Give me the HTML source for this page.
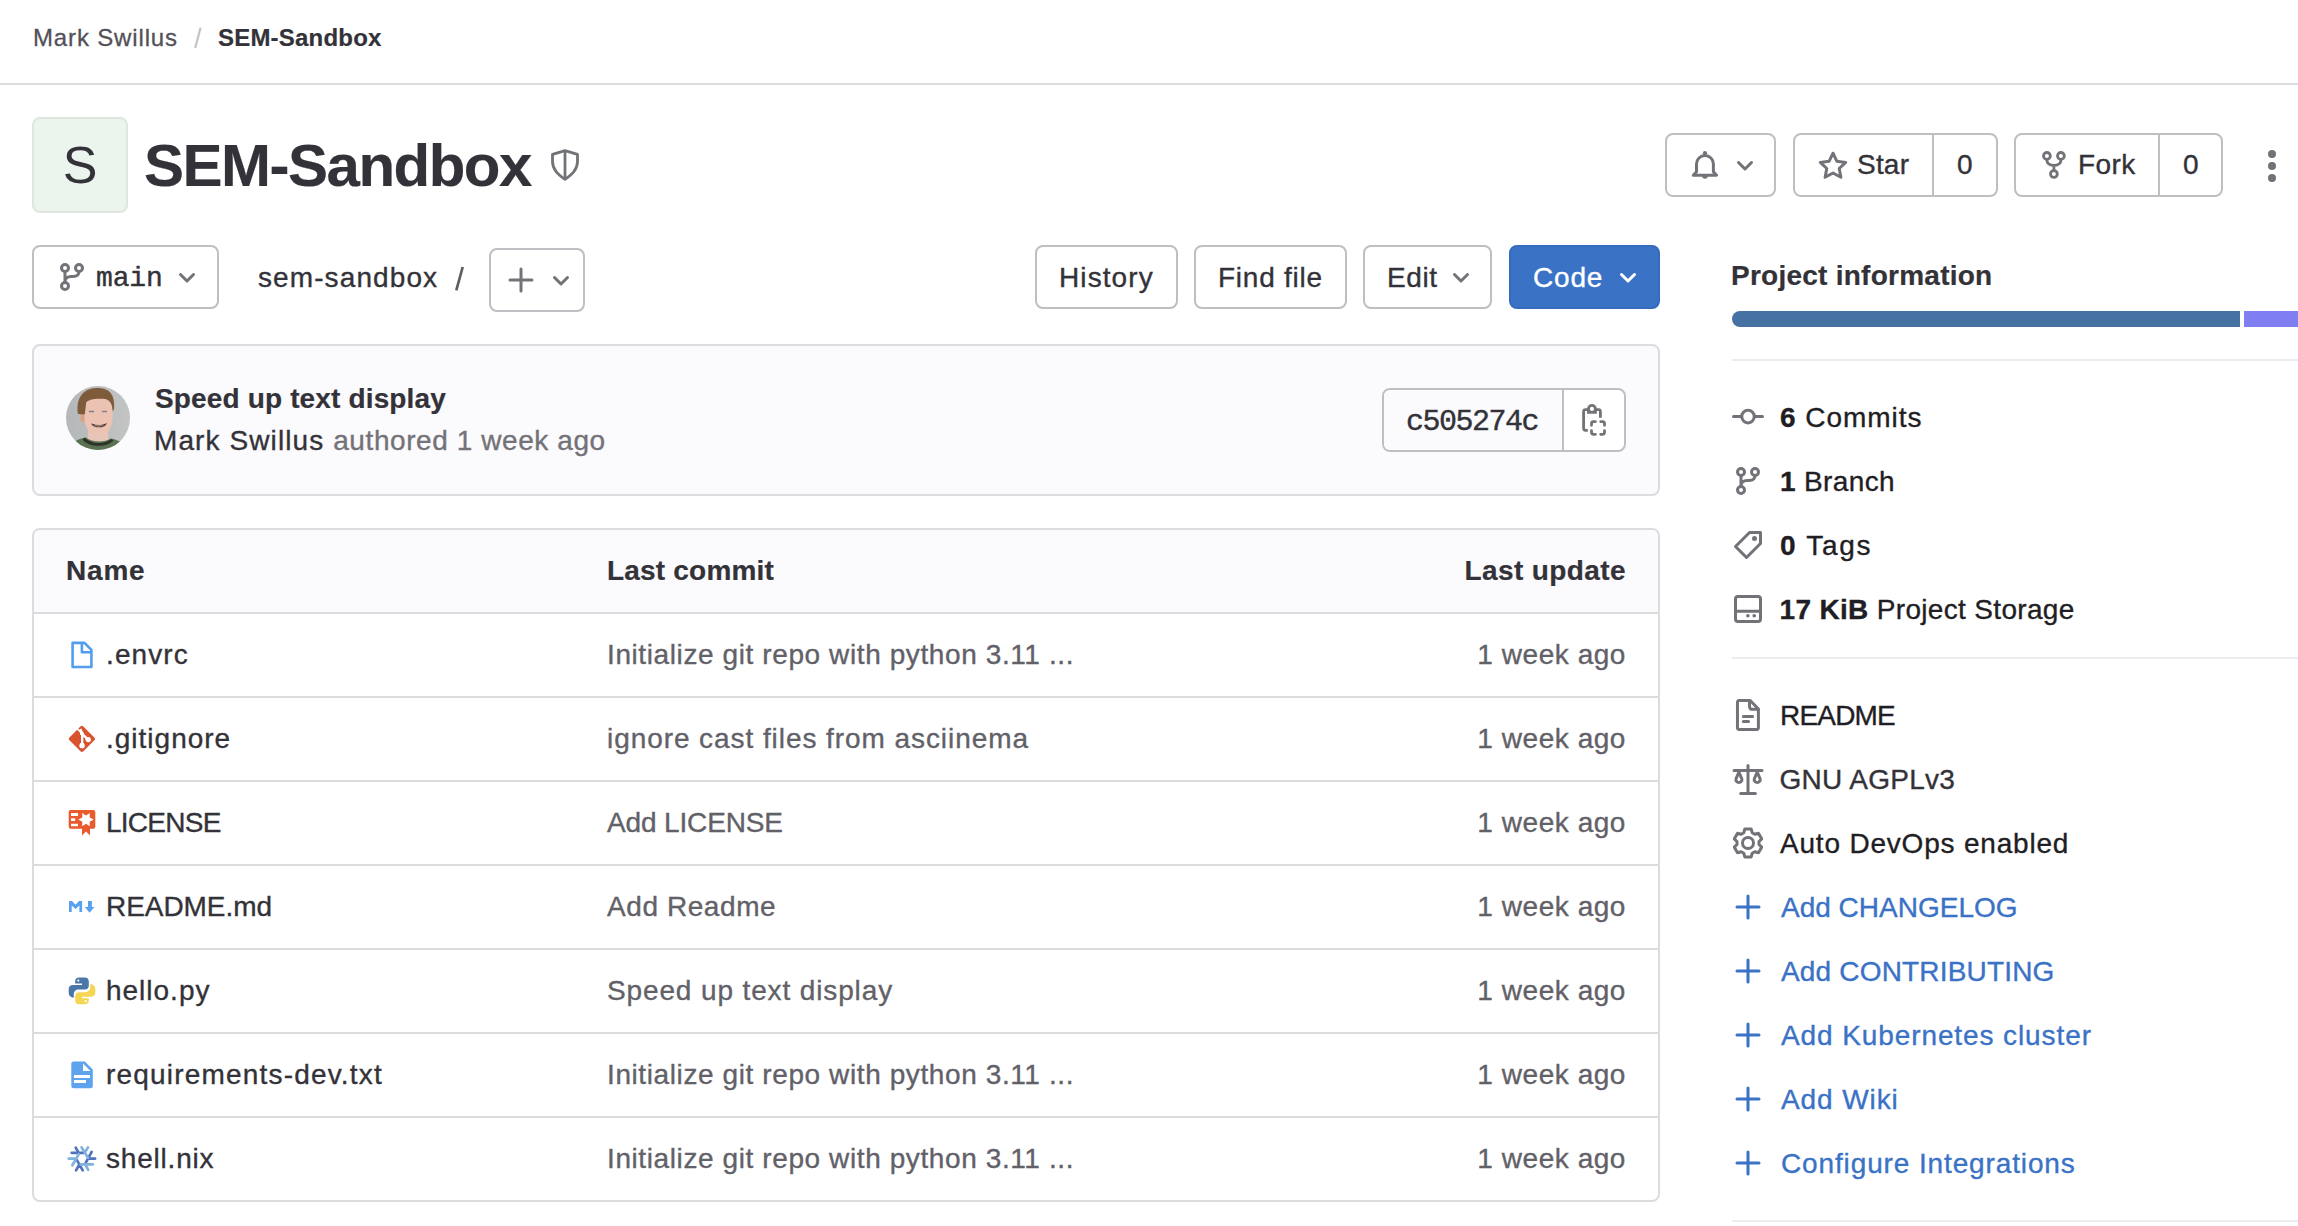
<!DOCTYPE html>
<html><head><meta charset="utf-8">
<style>
*{box-sizing:border-box;margin:0;padding:0}
html,body{width:2298px;height:1226px;overflow:hidden;background:#fff}
body{font-family:"Liberation Sans",sans-serif;color:#333238;position:relative}
.a{position:absolute;white-space:nowrap}
.t28{font-size:28px;line-height:40px;height:40px;-webkit-text-stroke:0.35px currentColor}
.b{-webkit-text-stroke:0.2px currentColor}
.b{font-weight:bold}
.btn{position:absolute;border:2px solid #bfbfc3;border-radius:8px;background:#fff}
svg{position:absolute;overflow:visible}
.ic{fill:none;stroke:#737278;stroke-width:1.5;stroke-linecap:round;stroke-linejoin:round}
.hl{position:absolute;height:2px;background:#dcdcde}
.mono{font-family:"Liberation Mono",monospace;-webkit-text-stroke:0.4px currentColor}
</style></head><body>

<!-- breadcrumb -->
<div class="a" style="left:33px;top:21.5px;font-size:24px;line-height:32px;color:#535158;letter-spacing:0.85px;-webkit-text-stroke:0.3px currentColor">Mark Swillus</div>
<svg style="left:190px;top:22px" width="16" height="32" viewBox="0 0 16 32"><path d="M5.2 26 10.6 5.6" stroke="#c4c3c9" stroke-width="2.2"/></svg>
<div class="a b" style="left:218px;top:21.5px;font-size:24px;line-height:32px;color:#333238;letter-spacing:0.2px">SEM-Sandbox</div>
<div class="hl" style="left:0;top:83px;width:2298px;background:#dcdcde"></div>

<!-- project avatar + title -->
<div class="a" style="left:32px;top:117px;width:96px;height:96px;border:2px solid #dfe6e0;border-radius:8px;background:#ecf4ee;text-align:center;font-size:52px;line-height:92px;color:#333238">S</div>
<div class="a b" style="left:144px;top:129.5px;font-size:60px;line-height:72px;letter-spacing:-1.5px;color:#333238">SEM-Sandbox</div>



<!-- shield -->
<svg style="left:540px;top:140px" width="50" height="50" viewBox="0 0 50 50"><g fill="none" stroke="#737278" stroke-width="2.8" stroke-linejoin="round"><path d="M25 10.6 12.5 14.4V21.5c0 8 5.5 12.8 12.5 17.8 7-5 12.5-9.8 12.5-17.8V14.4z"/><path d="M25 11v27"/></g></svg>

<!-- top right buttons -->
<div class="btn" style="left:1665px;top:133px;width:111px;height:64px"></div>
<svg style="left:1688px;top:148px" width="32" height="32" viewBox="0 0 16 16"><g fill="none" stroke="#737278" stroke-width="1.5" stroke-linejoin="round" stroke-linecap="round"><path d="M4.25 11.9V8a4.225 4.225 0 0 1 8.45 0v3.9l1.6 1.7H2.65z"/></g><circle cx="8.475" cy="2.6" r="1.05" fill="#737278"/><path d="M7.1 14h2.75a1.375 1.375 0 0 1-2.75 0z" fill="#737278"/></svg>
<svg style="left:1729px;top:149px" width="32" height="32" viewBox="0 0 16 16"><path class="ic" style="stroke:#737278" d="M4.75 6.75 8 10l3.25-3.25"/></svg>
<div class="btn" style="left:1793px;top:133px;width:205px;height:64px"></div>
<div class="a" style="left:1932px;top:135px;width:2px;height:60px;background:#bfbfc3"></div>
<svg style="left:1817px;top:150px" width="32" height="32" viewBox="0 0 16 16"><path class="ic" d="M8 1.6l1.95 4.05 4.4.55-3.25 3.05.85 4.4L8 11.5l-3.95 2.15.85-4.4L1.65 6.2l4.4-.55z"/></svg>
<div class="a t28" style="left:1857px;top:145px;letter-spacing:0.2px">Star</div>
<div class="a t28" style="left:1957px;top:145px">0</div>
<div class="btn" style="left:2014px;top:133px;width:209px;height:64px"></div>
<div class="a" style="left:2158px;top:135px;width:2px;height:60px;background:#bfbfc3"></div>
<svg style="left:2034px;top:145px" width="40" height="40" viewBox="0 0 40 40"><g fill="none" stroke="#737278" stroke-width="2.8" stroke-linecap="round"><circle cx="12.9" cy="10.9" r="3.4"/><circle cx="26.9" cy="10.9" r="3.4"/><circle cx="19.9" cy="29" r="3.4"/><path d="M12.9 14.3v1.2c0 3 2.6 4.5 7 5 4.4-.5 7-2 7-5v-1.2M19.9 20.5v5.1"/></g></svg>
<div class="a t28" style="left:2078px;top:145px;letter-spacing:0.4px">Fork</div>
<div class="a t28" style="left:2183px;top:145px">0</div>
<div class="a" style="left:2268px;top:149.5px;width:8.2px;height:8.2px;border-radius:50%;background:#737278"></div>
<div class="a" style="left:2268px;top:161.5px;width:8.2px;height:8.2px;border-radius:50%;background:#737278"></div>
<div class="a" style="left:2268px;top:173.5px;width:8.2px;height:8.2px;border-radius:50%;background:#737278"></div>

<!-- branch row -->
<div class="btn" style="left:32px;top:245px;width:187px;height:64px"></div>
<svg style="left:56px;top:261px" width="32" height="32" viewBox="0 0 16 16"><g class="ic"><circle cx="4.5" cy="3.5" r="1.75"/><circle cx="11.5" cy="3.5" r="1.75"/><circle cx="4.5" cy="12.5" r="1.75"/><path d="M4.5 5.25v5.5M11.5 5.25c0 1.6-1.2 2.5-3 2.5h-1c-1.8 0-3 1-3 2.5"/></g></svg>
<div class="a mono" style="left:96px;top:259px;font-size:28px;line-height:40px;color:#333238;letter-spacing:-0.15px">main</div>
<svg style="left:171px;top:261px" width="32" height="32" viewBox="0 0 16 16"><path class="ic" style="stroke:#737278" d="M4.75 6.75 8 10l3.25-3.25"/></svg>
<div class="a t28" style="left:258px;top:258px;letter-spacing:1.1px">sem-sandbox</div>
<svg style="left:450px;top:262px" width="20" height="34" viewBox="0 0 20 34"><path d="M6.3 28.3 12.7 5" stroke="#5f5e64" stroke-width="2.7" stroke-linecap="butt"/></svg>
<div class="btn" style="left:489px;top:248px;width:96px;height:64px"></div>
<svg style="left:505px;top:264px" width="32" height="32" viewBox="0 0 16 16"><path class="ic" style="stroke:#737278" d="M8 2.5v11M2.5 8h11"/></svg>
<svg style="left:545px;top:264px" width="32" height="32" viewBox="0 0 16 16"><path class="ic" style="stroke:#737278" d="M4.75 6.75 8 10l3.25-3.25"/></svg>

<div class="btn" style="left:1035px;top:245px;width:143px;height:64px"></div>
<div class="a t28" style="left:1059px;top:258px;letter-spacing:1.1px">History</div>
<div class="btn" style="left:1194px;top:245px;width:153px;height:64px"></div>
<div class="a t28" style="left:1218px;top:258px;letter-spacing:0.75px">Find file</div>
<div class="btn" style="left:1363px;top:245px;width:129px;height:64px"></div>
<div class="a t28" style="left:1387px;top:258px;letter-spacing:0.6px">Edit</div>
<svg style="left:1445px;top:261px" width="32" height="32" viewBox="0 0 16 16"><path class="ic" style="stroke:#737278" d="M4.75 6.75 8 10l3.25-3.25"/></svg>
<div class="btn" style="left:1509px;top:245px;width:151px;height:64px;background:#3a72c6;border-color:#346bbb"></div>
<div class="a t28" style="left:1533px;top:258px;color:#fff;letter-spacing:0.8px">Code</div>
<svg style="left:1612px;top:261px" width="32" height="32" viewBox="0 0 16 16"><path class="ic" style="stroke:#fff" d="M4.75 6.75 8 10l3.25-3.25"/></svg>

<!-- sidebar header -->
<div class="a t28 b" style="left:1731px;top:255.5px;letter-spacing:0.25px">Project information</div>
<div class="a" style="left:1732px;top:311px;width:508px;height:16px;background:#4672a3;border-radius:8px 0 0 8px"></div>
<div class="a" style="left:2244px;top:311px;width:54px;height:16px;background:#7f7ff2"></div>
<div class="hl" style="left:1732px;top:359px;width:566px;background:#ececef"></div>

<!-- commit box -->
<div class="a" style="left:32px;top:344px;width:1628px;height:152px;border:2px solid #dcdcde;border-radius:8px;background:#fbfafd"></div>
<svg style="left:66px;top:386px" width="64" height="64" viewBox="0 0 64 64">
<defs><clipPath id="cc"><circle cx="32" cy="32" r="32"/></clipPath><linearGradient id="bgg" x1="0" x2="1" y1="0" y2="0"><stop offset="0" stop-color="#b5b8ba"/><stop offset="1" stop-color="#c2c3c3"/></linearGradient></defs>
<g clip-path="url(#cc)">
<rect width="64" height="64" fill="url(#bgg)"/>
<path d="M22 42H42V57H22z" fill="#e6c6b8"/>
<path d="M2 66C4 57 12 52.5 20 51.5 25 56 38 57 45 52.5 53 54 60 58 62 66z" fill="#5a7253"/>
<path d="M19 51.5C23 58 39 59 45 53L47.5 54.5C41 62 22 61.5 16.5 53.5z" fill="#2c3226"/>
<ellipse cx="17" cy="31.5" rx="2.8" ry="5" fill="#d6a28c"/>
<path d="M18.5 22C18.5 14 24 11.5 32.5 11.5 41 11.5 46.5 14 46.5 22V32C46.5 43 40 49.5 32.5 49.5 25 49.5 18.5 43 18.5 32z" fill="#ecc3b3"/>
<path d="M12 28C9.5 14 16 2.5 30 2 43 1.5 49.5 8 48 23L46.6 25.5C46.5 17.5 43.5 13 37 12.8 30 12.3 23 13 20.2 16.5L18.8 28.5z" fill="#7d5b3b"/>
<path d="M23.5 25.5h4M36.5 25.5h4" stroke="#7d7f8c" stroke-width="1.4" stroke-linecap="round"/>
<path d="M26.5 38.5C29 41.5 37 41.5 39.5 38.3 36 39.6 30 39.6 26.5 38.5z" fill="#5a3e38" stroke="#5a3e38" stroke-width="1.2"/>
<path d="M27.5 38.9C30 39.9 36 39.9 38.5 38.8 36 40.6 30 40.6 27.5 38.9z" fill="#eadfc8"/>
</g></svg>
<div class="a t28 b" style="left:155px;top:379px;letter-spacing:0.15px">Speed up text display</div>
<div class="a t28" style="left:154px;top:421px;letter-spacing:1.1px">Mark Swillus <span style="color:#737278;letter-spacing:0.58px">authored 1 week ago</span></div>
<div class="a" style="left:1382px;top:388px;width:244px;height:64px;border:2px solid #bfbfc3;border-radius:8px;background:#fff;overflow:hidden"><div style="position:absolute;left:0;top:0;width:180px;height:60px;background:#fbfafd;border-right:2px solid #bfbfc3"></div></div>
<div class="a mono" style="left:1406px;top:401.5px;font-size:30px;line-height:40px;letter-spacing:-1.5px">c505274c</div>
<svg style="left:1574px;top:398px" width="40" height="44" viewBox="0 0 40 44"><g fill="none" stroke="#737278" stroke-width="2.8"><path d="M13.8 32.3h-2.2a2 2 0 0 1-2-2V13.6a2 2 0 0 1 2-2H14M22 11.6h2.4a2 2 0 0 1 2 2v6.1"/><path stroke-linecap="round" stroke-linejoin="round" d="M17.5 27.3v-1.7a2 2 0 0 1 2-2h1.9M26.7 23.6h1.8a2 2 0 0 1 2 2v1.7M30.5 32.6v1.7a2 2 0 0 1-2 2h-1.8M21.4 36.3h-1.9a2 2 0 0 1-2-2v-1.7"/></g><path fill="#737278" d="M13.05 10.9a4.9 4.9 0 0 1 9.8 0V15.8H13.05z"/><circle cx="17.95" cy="10.9" r="2.05" fill="#fff"/></svg>

<!-- table -->
<div class="a" style="left:32px;top:528px;width:1628px;height:674px;border:2px solid #dcdcde;border-radius:8px;background:#fff;overflow:hidden"><div style="position:absolute;left:0;top:0;width:100%;height:83px;background:#fbfafd"></div></div>
<div class="a t28 b" style="left:66px;top:551.3px;letter-spacing:0.8px">Name</div>
<div class="a t28 b" style="left:607px;top:551.3px;letter-spacing:0.2px">Last commit</div>
<div class="a t28 b" style="right:672px;top:551.3px;letter-spacing:0.4px">Last update</div>
<div class="hl" style="left:34px;top:612px;width:1624px"></div>
<div class="a t28" style="left:106px;top:635.3px;letter-spacing:1.10px">.envrc</div>
<div class="a t28" style="left:607px;top:635.3px;color:#626168;letter-spacing:0.6px">Initialize git repo with python 3.11 ...</div>
<div class="a t28" style="right:672px;top:635.3px;color:#626168;letter-spacing:0.55px">1 week ago</div>
<div class="hl" style="left:34px;top:696px;width:1624px"></div>
<div class="a t28" style="left:106px;top:719.3px;letter-spacing:1.00px">.gitignore</div>
<div class="a t28" style="left:607px;top:719.3px;color:#626168;letter-spacing:0.93px">ignore cast files from asciinema</div>
<div class="a t28" style="right:672px;top:719.3px;color:#626168;letter-spacing:0.55px">1 week ago</div>
<div class="hl" style="left:34px;top:780px;width:1624px"></div>
<div class="a t28" style="left:106px;top:803.3px;letter-spacing:-0.75px">LICENSE</div>
<div class="a t28" style="left:607px;top:803.3px;color:#626168;letter-spacing:-0.14px">Add LICENSE</div>
<div class="a t28" style="right:672px;top:803.3px;color:#626168;letter-spacing:0.55px">1 week ago</div>
<div class="hl" style="left:34px;top:864px;width:1624px"></div>
<div class="a t28" style="left:106px;top:887.3px;letter-spacing:-0.05px">README.md</div>
<div class="a t28" style="left:607px;top:887.3px;color:#626168;letter-spacing:0.58px">Add Readme</div>
<div class="a t28" style="right:672px;top:887.3px;color:#626168;letter-spacing:0.55px">1 week ago</div>
<div class="hl" style="left:34px;top:948px;width:1624px"></div>
<div class="a t28" style="left:106px;top:971.3px;letter-spacing:0.99px">hello.py</div>
<div class="a t28" style="left:607px;top:971.3px;color:#626168;letter-spacing:0.87px">Speed up text display</div>
<div class="a t28" style="right:672px;top:971.3px;color:#626168;letter-spacing:0.55px">1 week ago</div>
<div class="hl" style="left:34px;top:1032px;width:1624px"></div>
<div class="a t28" style="left:106px;top:1055.3px;letter-spacing:1.19px">requirements-dev.txt</div>
<div class="a t28" style="left:607px;top:1055.3px;color:#626168;letter-spacing:0.6px">Initialize git repo with python 3.11 ...</div>
<div class="a t28" style="right:672px;top:1055.3px;color:#626168;letter-spacing:0.55px">1 week ago</div>
<div class="hl" style="left:34px;top:1116px;width:1624px"></div>
<div class="a t28" style="left:106px;top:1139.3px;letter-spacing:0.80px">shell.nix</div>
<div class="a t28" style="left:607px;top:1139.3px;color:#626168;letter-spacing:0.6px">Initialize git repo with python 3.11 ...</div>
<div class="a t28" style="right:672px;top:1139.3px;color:#626168;letter-spacing:0.55px">1 week ago</div>

<!-- sidebar -->
<svg style="left:1732px;top:400px" width="32" height="32" viewBox="0 0 16 16"><g class="ic"><circle cx="8" cy="8.3" r="3.15"/><path d="M.75 8.3h4.1M11.15 8.3h4.1"/></g></svg>
<div class="a t28" style="left:1780px;top:398px;color:#1f1e24;letter-spacing:0.95px"><b>6</b> Commits</div>
<svg style="left:1732px;top:465px" width="32" height="32" viewBox="0 0 16 16"><g class="ic"><circle cx="4.5" cy="3.5" r="1.75"/><circle cx="11.5" cy="3.5" r="1.75"/><circle cx="4.5" cy="12.5" r="1.75"/><path d="M4.5 5.25v5.5M11.5 5.25c0 1.6-1.2 2.5-3 2.5h-1c-1.8 0-3 1-3 2.5"/></g></svg>
<div class="a t28" style="left:1780px;top:462.3px;color:#1f1e24;letter-spacing:0.36px"><b>1</b> Branch</div>
<svg style="left:1732px;top:529px" width="32" height="32" viewBox="0 0 16 16"><g class="ic"><path d="M14.25 1.75v5.5l-7 7-5.5-5.5 7-7z"/><circle cx="11.25" cy="4.75" r=".5" fill="#737278"/></g></svg>
<div class="a t28" style="left:1780px;top:525.8px;color:#1f1e24;letter-spacing:1.7px"><b>0</b> Tags</div>
<svg style="left:1732px;top:593px" width="32" height="32" viewBox="0 0 16 16"><g class="ic"><rect x="1.75" y="1.75" width="12.5" height="12.5" rx="1.25"/><path d="M1.75 9.1h12.5"/></g><circle cx="7.95" cy="11.4" r=".9" fill="#737278"/><circle cx="11.1" cy="11.4" r=".9" fill="#737278"/></svg>
<div class="a t28" style="left:1779.5px;top:590.3px;color:#1f1e24;letter-spacing:0.33px"><b>17 KiB</b> Project Storage</div>
<div class="hl" style="left:1732px;top:657px;width:566px;background:#ececef"></div>
<svg style="left:1732px;top:699px" width="32" height="32" viewBox="0 0 16 16"><g class="ic"><path d="M2.73 1.48a.7.7 0 0 1 .7-.7H9.1l4.1 4.2v9.52a.7.7 0 0 1-.7.7H3.43a.7.7 0 0 1-.7-.7z"/><path d="M8.77 .9v3a1.28 1.28 0 0 0 1.28 1.28h3.1M5.67 8.7h4.63M5.67 11.2h2.6"/></g></svg>
<div class="a t28" style="left:1780px;top:696px;color:#1f1e24;letter-spacing:-0.8px">README</div>
<svg style="left:1732px;top:763px" width="32" height="32" viewBox="0 0 16 16"><g fill="none" stroke="#737278" stroke-width="1.5" stroke-linecap="round" stroke-linejoin="round"><path d="M8 1.25v13.95M4.35 15.2H11.7M1 3.7h14"/><path d="M3.45 4.6 2 7.9a1.5 1.5 0 1 0 2.9 0z"/><path d="M12.6 4.6 11.15 7.9a1.5 1.5 0 1 0 2.9 0z"/></g></svg>
<div class="a t28" style="left:1779.5px;top:760px;color:#333238;letter-spacing:0.3px">GNU AGPLv3</div>
<svg style="left:1732px;top:827px" width="32" height="32" viewBox="0 0 16 16"><g fill="none" stroke="#737278" stroke-width="1.5" stroke-linejoin="round"><path d="M10.08 2.85 L9.61 1.03 L6.39 1.03 L5.92 2.85 L4.58 3.63 L2.77 3.12 L1.16 5.91 L2.50 7.23 L2.50 8.77 L1.16 10.09 L2.77 12.88 L4.58 12.37 L5.92 13.15 L6.39 14.97 L9.61 14.97 L10.08 13.15 L11.42 12.37 L13.23 12.88 L14.84 10.09 L13.50 8.77 L13.50 7.23 L14.84 5.91 L13.23 3.12 L11.42 3.63z"/><circle cx="8" cy="8" r="2.75"/></g></svg>
<div class="a t28" style="left:1780px;top:824px;color:#1f1e24;letter-spacing:0.8px">Auto DevOps enabled</div>
<svg style="left:1732px;top:891px" width="32" height="32" viewBox="0 0 16 16"><path class="ic" style="stroke:#3a72c6" d="M8 2.5v11M2.5 8h11"/></svg>
<div class="a t28" style="left:1781px;top:887.8px;color:#3a72c6;letter-spacing:0px">Add CHANGELOG</div>
<svg style="left:1732px;top:955px" width="32" height="32" viewBox="0 0 16 16"><path class="ic" style="stroke:#3a72c6" d="M8 2.5v11M2.5 8h11"/></svg>
<div class="a t28" style="left:1781px;top:951.8px;color:#3a72c6;letter-spacing:0.18px">Add CONTRIBUTING</div>
<svg style="left:1732px;top:1019px" width="32" height="32" viewBox="0 0 16 16"><path class="ic" style="stroke:#3a72c6" d="M8 2.5v11M2.5 8h11"/></svg>
<div class="a t28" style="left:1781px;top:1015.8px;color:#3a72c6;letter-spacing:0.9px">Add Kubernetes cluster</div>
<svg style="left:1732px;top:1083px" width="32" height="32" viewBox="0 0 16 16"><path class="ic" style="stroke:#3a72c6" d="M8 2.5v11M2.5 8h11"/></svg>
<div class="a t28" style="left:1781px;top:1079.8px;color:#3a72c6;letter-spacing:0.9px">Add Wiki</div>
<svg style="left:1732px;top:1147px" width="32" height="32" viewBox="0 0 16 16"><path class="ic" style="stroke:#3a72c6" d="M8 2.5v11M2.5 8h11"/></svg>
<div class="a t28" style="left:1781px;top:1143.8px;color:#3a72c6;letter-spacing:0.87px">Configure Integrations</div>
<div class="hl" style="left:1732px;top:1220px;width:566px;background:#ececef"></div>
<!-- file icons -->
<svg style="left:62px;top:634px" width="40" height="40" viewBox="0 0 40 40"><g fill="none" stroke="#529ded" stroke-width="2.6" stroke-linejoin="round"><path d="M10.6 8.9h11.9l6.9 6.9V33H10.6z"/><path d="M19.9 8.9v9.4h9.5"/></g></svg>
<svg style="left:68px;top:725px" width="27.8" height="27.8" viewBox="0 0 97 97"><path fill="#d9532f" d="M92.71 44.408 52.591 4.291c-2.31-2.311-6.057-2.311-8.369 0l-8.33 8.332L46.459 23.19c2.456-.83 5.272-.273 7.229 1.685 1.969 1.97 2.521 4.81 1.67 7.275l10.186 10.185c2.465-.85 5.307-.3 7.275 1.671 2.75 2.75 2.75 7.206 0 9.958-2.752 2.751-7.208 2.751-9.961 0-2.068-2.07-2.58-5.11-1.531-7.658l-9.5-9.499v24.997c.67.332 1.303.774 1.861 1.332 2.75 2.75 2.75 7.206 0 9.959-2.75 2.749-7.209 2.749-9.957 0-2.75-2.754-2.75-7.210 0-9.959.68-.679 1.467-1.193 2.307-1.537v-25.23c-.84-.344-1.625-.853-2.307-1.537-2.083-2.082-2.584-5.14-1.516-7.698L31.798 16.715 4.288 44.222c-2.311 2.313-2.311 6.06 0 8.371l40.121 40.118c2.31 2.311 6.056 2.311 8.369 0L92.71 52.779c2.311-2.311 2.311-6.06 0-8.371z"/><g fill="#fff"><path fill="none" stroke="#fff" stroke-width="8" d="M43 14 49.5 30V70M51 33 70 51"/><circle cx="49" cy="72" r="9.5"/><circle cx="71" cy="51" r="9"/></g></svg>
<svg style="left:62px;top:802px" width="40" height="40" viewBox="0 0 40 40"><path fill="#e95a2c" d="M6.7 10a2 2 0 0 1 2-2h22.6a2 2 0 0 1 2 2v14.75a2 2 0 0 1-2 2H28v6.85l-4-4.1-4 4.1v-6.85H8.7a2 2 0 0 1-2-2z"/><g fill="#fff"><path d="M9 11h7v2.9H9zM9 16.2h4.2V19H9zM9 21.7h7v2.6H9z"/><path d="M31.70,17.60 L27.64,15.50 L27.85,10.93 L24.00,13.40 L20.15,10.93 L20.36,15.50 L16.30,17.60 L20.36,19.70 L20.15,24.27 L24.00,21.80 L27.85,24.27 L27.64,19.70z"/></g></svg>
<svg style="left:62px;top:886px" width="40" height="40" viewBox="0 0 40 40"><g fill="#58a1ef"><path d="M7 15h3l3.5 3.8L17 15h3.1v11h-2.7v-6.4l-3.9 3.4-3.8-3.4V26H7z"/><path d="M26 15h3.9v5.9h2.6l-4.9 5.9-4.8-5.9H26z"/></g></svg>
<svg style="left:62px;top:970px" width="40" height="40" viewBox="0 0 40 40"><path fill="#4a76a8" d="M17 7.5h5.8c2.4 0 4 1.6 4 4v4.3c0 2.3-1.6 3.8-4 3.8h-6.3c-2.6 0-4.7 2-4.7 4.6v3.6c-3-.4-5.1-2-5.1-4.8v-4c0-2.6 1.8-4 4.3-4H20v-1.4h-6.8V11c0-2.2 1.6-3.5 3.8-3.5z"/><circle cx="16.3" cy="10.6" r="1.1" fill="#fff"/><g transform="rotate(180 20 20.9)"><path fill="#f4d653" d="M17 7.5h5.8c2.4 0 4 1.6 4 4v4.3c0 2.3-1.6 3.8-4 3.8h-6.3c-2.6 0-4.7 2-4.7 4.6v3.6c-3-.4-5.1-2-5.1-4.8v-4c0-2.6 1.8-4 4.3-4H20v-1.4h-6.8V11c0-2.2 1.6-3.5 3.8-3.5z"/><circle cx="16.3" cy="10.6" r="1.1" fill="#fff"/></g></svg>
<svg style="left:62px;top:1054px" width="40" height="40" viewBox="0 0 40 40"><path fill="#5ea3ee" d="M9.3 9.8A2.2 2.2 0 0 1 11.5 7.6h11.3l8 8V32a2.2 2.2 0 0 1-2.2 2.2H11.5A2.2 2.2 0 0 1 9.3 32z"/><g fill="#fff"><path d="M21 9.5v7.5h7.5z"/><path d="M11.9 20.9H28V24H11.9zM11.9 26H24v2.9H11.9z"/></g></svg>
<svg style="left:62px;top:1138px" width="40" height="40" viewBox="0 0 40 40"><g fill="none" stroke-width="2.9" stroke-linecap="round" transform="translate(20 20.8) scale(.92) translate(-20 -21)"><g stroke="#5071bf"><path d="M8.8 14.5h13.2M13.2 9l3.3 5.5M30.5 13.5 24 25.5M27.8 20.8h6.5M14.5 22.5 20.8 33.5M13.5 33.5l3.2-5.5"/></g><g stroke="#80b2dd"><path d="M19.5 8.5l7 11.5M26.5 8.5l-3.4 5.8M16.5 16 9.5 28M5.5 20.8H12M18.5 27h13.3M23.5 27l3.2 6"/></g></g></svg>

</body></html>
